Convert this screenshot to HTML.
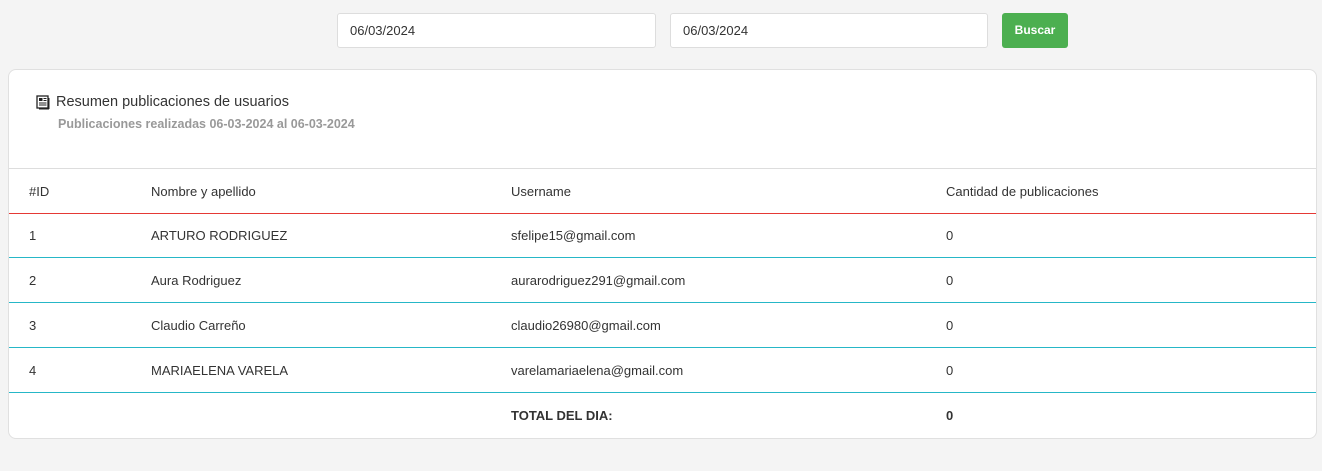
<!DOCTYPE html>
<html><head><style>
body{margin:0;background:#f4f4f4;font-family:"Liberation Sans",sans-serif;width:1322px;height:471px;position:relative;overflow:hidden;color:#333}
.in{position:absolute;top:13px;height:33px;background:#fff;border:1px solid #ddd;border-radius:3px;font-size:13px;line-height:33px;padding-left:12px;box-sizing:content-box}
.btn{position:absolute;left:1002px;top:13px;width:66px;height:35px;background:#4caf50;border-radius:3px;color:#fff;font-size:12px;font-weight:bold;line-height:35px;text-align:center}
.card{position:absolute;left:8px;top:69px;width:1307px;height:368px;background:#fff;border:1px solid #e0e0e0;border-radius:8px;overflow:hidden}
.title{position:absolute;left:47px;top:24px;font-size:14.5px;color:#333}
.sub{position:absolute;left:49px;top:47px;font-size:12.5px;color:#999;font-weight:bold}
.row{position:absolute;left:0;width:1307px;height:45px;font-size:13px;line-height:45px}
.row span{position:absolute}
.c1{left:20px}.c2{left:142px}.c3{left:502px}.c4{left:937px}
</style></head><body>
<div class="in" style="left:337px;width:305px">06/03/2024</div>
<div class="in" style="left:670px;width:304px">06/03/2024</div>
<div class="btn">Buscar</div>
<div class="card">
<svg style="position:absolute;left:27px;top:25px" width="14" height="15" viewBox="0 0 14 15"><rect x="1" y="1" width="11" height="12" fill="none" stroke="#222" stroke-width="1.3"/><line x1="13" y1="3" x2="13" y2="14" stroke="#222"/><line x1="3" y1="14" x2="13" y2="14" stroke="#222"/><rect x="3" y="3" width="3.5" height="3" fill="#222"/><path d="M7.5 3.5h3M7.5 5.5h3M3 8h7.5M3 10h7.5" stroke="#222" stroke-width="1"/></svg>
<div class="title">Resumen publicaciones de usuarios</div>
<div class="sub">Publicaciones realizadas 06-03-2024 al 06-03-2024</div>
<div class="row" style="top:98px;border-top:1px solid #ddd;border-bottom:1px solid #e53935;height:44px"><span class="c1">#ID</span><span class="c2">Nombre y apellido</span><span class="c3">Username</span><span class="c4">Cantidad de publicaciones</span></div>
<div class="row" style="top:143px;border-bottom:1px solid #26b7c7;height:44px"><span class="c1">1</span><span class="c2">ARTURO RODRIGUEZ</span><span class="c3">sfelipe15@gmail.com</span><span class="c4">0</span></div>
<div class="row" style="top:188px;border-bottom:1px solid #26b7c7;height:44px"><span class="c1">2</span><span class="c2">Aura Rodriguez</span><span class="c3">aurarodriguez291@gmail.com</span><span class="c4">0</span></div>
<div class="row" style="top:233px;border-bottom:1px solid #26b7c7;height:44px"><span class="c1">3</span><span class="c2">Claudio Carreño</span><span class="c3">claudio26980@gmail.com</span><span class="c4">0</span></div>
<div class="row" style="top:278px;border-bottom:1px solid #26b7c7;height:44px"><span class="c1">4</span><span class="c2">MARIAELENA VARELA</span><span class="c3">varelamariaelena@gmail.com</span><span class="c4">0</span></div>
<div class="row" style="top:323px;font-weight:bold"><span class="c3">TOTAL DEL DIA:</span><span class="c4">0</span></div>
</div>
</body></html>
